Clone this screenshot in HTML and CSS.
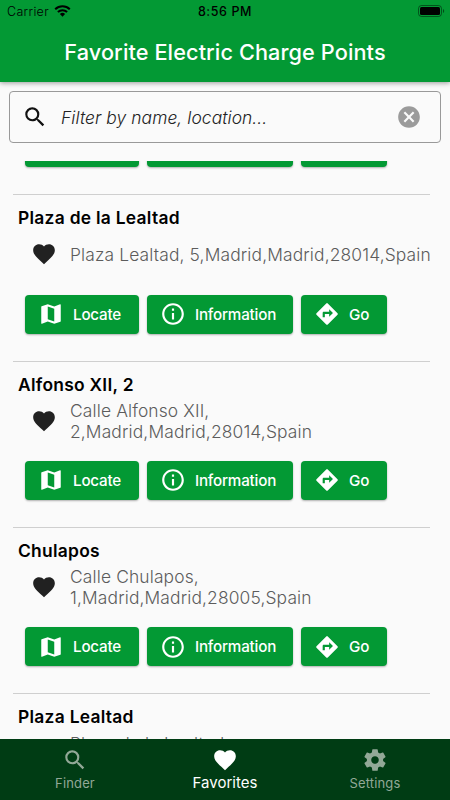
FILE: index.html
```html
<!DOCTYPE html>
<html lang="en">
<head>
    <meta charset="UTF-8">
    <title>Favorite Electric Charge Points</title>
    <meta name="viewport" content="width=device-width, initial-scale=1.0">
    <link rel="stylesheet" href="styles.css">
</head>
<body>
<!-- Shared icons -->
<svg class="icon-defs" width="0" height="0">
    <symbol id="i-search" viewBox="0 0 24 24"><path d="M15.5 14h-.79l-.28-.27A6.47 6.47 0 0 0 16 9.500 6.500 6.500 0 1 0 9.500 16c1.610 0 3.090-.59 4.230-1.570l.27.28v.79l5 4.990L20.490 19l-4.990-5zm-6 0C7.010 14 5 11.990 5 9.500S7.010 5 9.500 5 14 7.010 14 9.500 11.990 14 9.500 14z"/></symbol>
    <symbol id="i-heart" viewBox="0 0 24 24"><path d="M12 21.350l-1.450-1.320C5.400 15.360 2 12.280 2 8.500 2 5.420 4.420 3 7.500 3c1.740 0 3.410.81 4.500 2.090C13.090 3.810 14.760 3 16.500 3 19.580 3 22 5.420 22 8.500c0 3.780-3.400 6.860-8.550 11.540L12 21.350z"/></symbol>
    <symbol id="i-map" viewBox="0 0 24 24"><path d="M20.500 3l-.16.03L15 5.100 9 3 3.360 4.900c-.21.07-.36.25-.36.48V20.500c0 .28.22.5.5.5l.16-.03L9 18.900l6 2.100 5.640-1.900c.21-.07.36-.25.36-.48V3.500c0-.28-.22-.5-.5-.5zM15 19l-6-2.110V5l6 2.110V19z"/></symbol>
    <symbol id="i-info" viewBox="0 0 24 24"><path d="M11 7h2v2h-2zm0 4h2v6h-2zm1-9C6.480 2 2 6.480 2 12s4.480 10 10 10 10-4.480 10-10S17.520 2 12 2zm0 18c-4.410 0-8-3.590-8-8s3.590-8 8-8 8 3.590 8 8-3.590 8-8 8z"/></symbol>
    <symbol id="i-go" viewBox="0 0 24 24"><path d="M21.710 11.290l-9-9a.996.996 0 0 0-1.410 0l-9 9a.996.996 0 0 0 0 1.410l9 9c.39.39 1.020.39 1.410 0l9-9a.996.996 0 0 0 0-1.410zM14 14.500V12h-4v3H8v-4c0-.55.45-1 1-1h5V7.500l3.500 3.500-3.500 3.500z"/></symbol>
    <symbol id="i-cancel" viewBox="0 0 24 24"><path d="M12 2C6.470 2 2 6.470 2 12s4.470 10 10 10 10-4.470 10-10S17.530 2 12 2zm5 13.590L15.590 17 12 13.410 8.410 17 7 15.590 10.590 12 7 8.410 8.410 7 12 10.590 15.590 7 17 8.410 13.410 12 17 15.590z"/></symbol>
    <symbol id="i-gear" viewBox="0 0 24 24"><path d="M19.430 12.980c.04-.32.07-.64.07-.98s-.03-.66-.07-.98l2.110-1.650c.19-.15.24-.42.12-.64l-2-3.460c-.12-.22-.39-.3-.61-.22l-2.490 1c-.52-.4-1.080-.73-1.690-.98l-.38-2.650C14.460 2.180 14.250 2 14 2h-4c-.25 0-.46.18-.49.42l-.38 2.650c-.61.25-1.170.59-1.690.98l-2.490-1c-.23-.09-.49 0-.61.22l-2 3.460c-.13.22-.07.49.12.64l2.110 1.650c-.04.32-.07.65-.07.98s.03.66.07.98l-2.110 1.650c-.19.15-.24.42-.12.64l2 3.460c.12.22.39.3.61.22l2.490-1c.52.4 1.080.73 1.690.98l.38 2.650c.03.24.24.42.49.42h4c.25 0 .46-.18.49-.42l.38-2.650c.61-.25 1.170-.59 1.690-.98l2.490 1c.23.09.49 0 .61-.22l2-3.460c.12-.22.07-.49-.12-.64l-2.110-1.650zM12 15.500c-1.930 0-3.500-1.570-3.500-3.500s1.570-3.500 3.500-3.500 3.500 1.570 3.500 3.500-1.570 3.500-3.500 3.500z"/></symbol>
</svg>

<div class="app">
    <header class="header">
        <div class="status-bar">
            <div class="carrier">
                <span>Carrier</span>
                <svg class="wifi" viewBox="0 0 17 12">
                    <path d="M1.200 4.300a10.400 10.400 0 0 1 14.600 0M3.900 7a6.600 6.600 0 0 1 9.200 0" fill="none" stroke="#000" stroke-width="2"/>
                    <path d="M8.500 11.700L5.900 9.100a3.700 3.700 0 0 1 5.200 0z"/>
                </svg>
            </div>
            <span class="clock">8:56 PM</span>
            <div class="battery-box">
                <svg class="battery" viewBox="0 0 27 12">
                    <rect x=".5" y=".5" width="23" height="11" rx="3" fill="none" stroke="#000" stroke-opacity=".45"/>
                    <rect x="2" y="2" width="20" height="8" rx="1.500"/>
                    <path d="M25 4v4c1.600-.6 1.600-3.400 0-4z" opacity=".5"/>
                </svg>
            </div>
        </div>
        <h1 class="title">Favorite Electric Charge Points</h1>
    </header>

    <div class="search">
        <svg class="icon"><use href="#i-search"/></svg>
        <span class="placeholder">Filter by name, location...</span>
        <svg class="icon clear"><use href="#i-cancel"/></svg>
    </div>

    <main class="list">
        <!-- bottom edge of the card scrolled under the search field -->
        <section class="point scrolled">
            <div class="actions">
                <span class="btn locate"></span>
                <span class="btn info"></span>
                <span class="btn go"></span>
            </div>
        </section>
        <section class="point">
            <h2 class="name">Plaza de la Lealtad</h2>
            <div class="place">
                <svg class="icon"><use href="#i-heart"/></svg>
                <p class="address">Plaza Lealtad, 5,Madrid,Madrid,28014,Spain</p>
            </div>
            <div class="actions">
                <button class="btn locate"><svg class="icon"><use href="#i-map"/></svg>Locate</button>
                <button class="btn info"><svg class="icon"><use href="#i-info"/></svg>Information</button>
                <button class="btn go"><svg class="icon"><use href="#i-go"/></svg>Go</button>
            </div>
        </section>
        <section class="point">
            <h2 class="name">Alfonso XII, 2</h2>
            <div class="place">
                <svg class="icon"><use href="#i-heart"/></svg>
                <p class="address">Calle Alfonso XII,<br>2,Madrid,Madrid,28014,Spain</p>
            </div>
            <div class="actions">
                <button class="btn locate"><svg class="icon"><use href="#i-map"/></svg>Locate</button>
                <button class="btn info"><svg class="icon"><use href="#i-info"/></svg>Information</button>
                <button class="btn go"><svg class="icon"><use href="#i-go"/></svg>Go</button>
            </div>
        </section>
        <section class="point">
            <h2 class="name">Chulapos</h2>
            <div class="place">
                <svg class="icon"><use href="#i-heart"/></svg>
                <p class="address">Calle Chulapos,<br>1,Madrid,Madrid,28005,Spain</p>
            </div>
            <div class="actions">
                <button class="btn locate"><svg class="icon"><use href="#i-map"/></svg>Locate</button>
                <button class="btn info"><svg class="icon"><use href="#i-info"/></svg>Information</button>
                <button class="btn go"><svg class="icon"><use href="#i-go"/></svg>Go</button>
            </div>
        </section>
        <section class="point">
            <h2 class="name">Plaza Lealtad</h2>
            <div class="place">
                <svg class="icon"><use href="#i-heart"/></svg>
                <p class="address">Plaza de la Lealtad,<br>&nbsp;</p>
            </div>
        </section>
    </main>

    <nav class="tabs">
        <a class="tab"><svg class="icon"><use href="#i-search"/></svg><span>Finder</span></a>
        <a class="tab active"><svg class="icon"><use href="#i-heart"/></svg><span>Favorites</span></a>
        <a class="tab"><svg class="icon"><use href="#i-gear"/></svg><span>Settings</span></a>
    </nav>
</div>
</body>
</html>
```

FILE: styles.css
```css
* {
    box-sizing: border-box;
}
body {
    margin: 0;
    font-family: Inter, Roboto, "Liberation Sans", sans-serif;
    background: #fafafa;
    color: #000;
}
.icon-defs {
    display: block;
}
.app {
    display: flex;
    flex-direction: column;
    height: 800px;
    width: 450px;
    overflow: hidden;
}
.icon {
    width: 26px;
    height: 26px;
    flex: none;
    fill: currentColor;
}

/* Header */
.header {
    flex: none;
    height: 82px;
    background: #039934;
    box-shadow: 0 1px 5px rgba(0,0,0,0.4);
}
.status-bar {
    display: flex;
    align-items: center;
    height: 22px;
    padding: 0 5px 0 7px;
    font-size: 12.5px;
}
.carrier,
.battery-box {
    flex: 1;
    display: flex;
    align-items: center;
    gap: 5px;
}
.carrier span {
    font-weight: 300;
    letter-spacing: 0.3px;
}
.battery-box {
    justify-content: flex-end;
}
.wifi {
    width: 17px;
    height: 12px;
}
.clock {
    margin-right: 2px;
    font-weight: 500;
    letter-spacing: 0.6px;
}
.battery {
    width: 27px;
    height: 12px;
}
.title {
    margin: 0;
    line-height: 60px;
    text-align: center;
    font-size: 21.7px;
    font-weight: 500;
    letter-spacing: 0.1px;
    color: #fff;
}

/* Search field */
.search {
    flex: none;
    display: flex;
    align-items: center;
    height: 52px;
    margin: 9px 9px 0;
    padding: 0 18px 0 12px;
    border: 1px solid #999;
    border-radius: 4px;
    color: #111;
}
.placeholder {
    flex: 1;
    margin-left: 13px;
    font-size: 17.4px;
    font-style: italic;
    font-weight: 300;
    letter-spacing: 0.08px;
    color: #222;
}
.clear {
    color: #9b9b9b;
}

/* Charge points */
.list {
    flex: 1;
    min-height: 0;
    margin-top: 18px;
    overflow: hidden;
}
.point {
    height: 166.3px;
    margin: 0 20px 0 13px;
    padding: 11px 0 0 5px;
    border-top: 1px solid #cfcfcf;
}
.point.scrolled {
    display: flow-root;
    height: 33.4px;
    padding-top: 0;
    border-top: none;
}
.scrolled .actions {
    margin-top: -33px;
}
.name {
    margin: 0;
    font-size: 17.4px;
    line-height: 24px;
    font-weight: 600;
    letter-spacing: 0.28px;
}
.place {
    display: flex;
    align-items: center;
    height: 48px;
    padding-left: 12.5px;
    color: #212121;
    white-space: nowrap;
}
.address {
    margin: 0 0 0 13.5px;
    padding-top: 2px;
    font-size: 17.4px;
    line-height: 20.6px;
    font-weight: 300;
    letter-spacing: 0.14px;
    color: #5c5c5c;
}
.actions {
    display: flex;
    gap: 8px;
    margin: 16.3px 0 0 7px;
}
.btn {
    display: flex;
    align-items: center;
    height: 39px;
    padding: 0 0 0 13px;
    border: none;
    border-radius: 4px;
    background: #039934;
    box-shadow: 0 1px 2px rgba(0,0,0,0.3);
    color: #fff;
    font-family: inherit;
    font-size: 15.2px;
    font-weight: 450;
    letter-spacing: -0.2px;
}
.btn .icon {
    margin-right: 9px;
}
.locate {
    width: 114px;
}
.info {
    width: 146px;
}
.go {
    width: 86px;
}

/* Bottom tabs */
.tabs {
    flex: none;
    display: flex;
    height: 61px;
    background: #003c14;
    color: #92a897;
}
.tab {
    flex: 1;
    display: flex;
    flex-direction: column;
    align-items: center;
    padding-top: 8px;
    font-size: 13px;
    line-height: 20px;
}
.tab span {
    letter-spacing: 0.15px;
}
.tab.active {
    color: #fff;
    font-size: 15px;
    line-height: 19px;
}
.tab.active span {
    letter-spacing: 0;
}
```
